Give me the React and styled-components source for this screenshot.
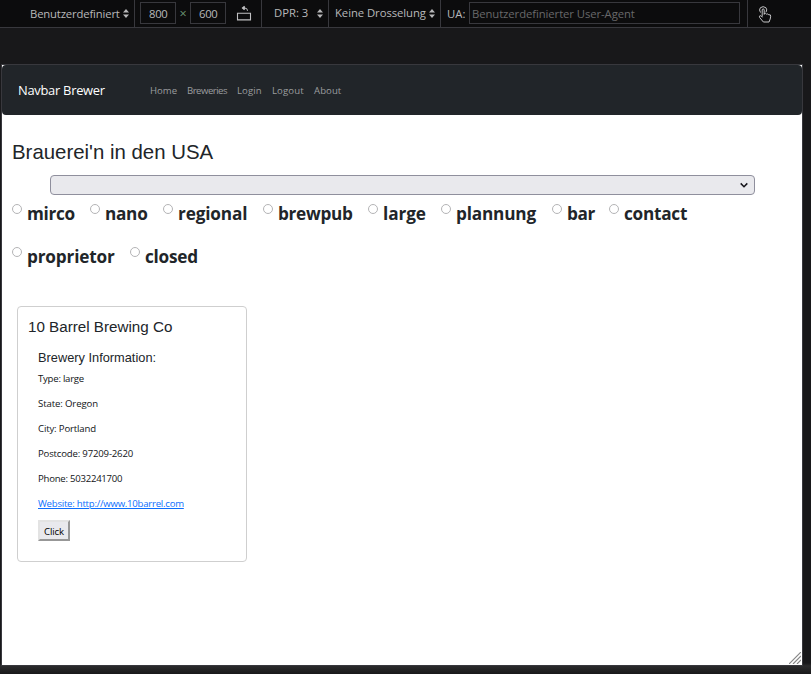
import React from "react";
import styled, { createGlobalStyle } from "styled-components";

const Global = createGlobalStyle`
  * { box-sizing: border-box; }
  body {
    margin: 0;
    background: #18181a;
    font-family: "Open Sans", "Noto Sans", sans-serif;
  }
`;

const Screen = styled.div`
  height: 674px;
  display: flex;
  flex-direction: column;
  overflow: hidden;
  background: #18181a;
`;

const Toolbar = styled.header`
  display: flex;
  height: 28px;
  flex: none;
  background: #0c0c0d;
  border-bottom: 1px solid #38383d;
  color: #b8b8ba;
  font-size: 11.3px;
  white-space: nowrap;
`;

const Group = styled.div`
  display: flex;
  align-items: center;
  width: ${(p) => p.$w}px;
  padding-left: ${(p) => p.$pad}px;
  padding-bottom: ${(p) => p.$lift || 0}px;
  border-right: ${(p) => (p.$last ? "0" : "1px solid #38383d")};
`;

const Text = styled.span`
  display: block;
  flex: none;
  width: ${(p) => p.$w}px;
  letter-spacing: ${(p) => p.$ls || 0}px;
  line-height: 16px;
`;

const SizeField = styled.div`
  width: 36px;
  height: 22px;
  margin-bottom: 1px;
  padding-left: 8px;
  border: 1px solid #38383d;
  line-height: 21px;
  letter-spacing: -0.3px;
`;

const Times = styled.span`
  width: 14px;
  text-align: center;
  font-size: 12.5px;
  color: #6f9a78;
`;

const AgentField = styled.div`
  width: 271px;
  height: 22px;
  margin-bottom: 1px;
  padding-left: 2px;
  border: 1px solid #38383d;
  color: #68686a;
  line-height: 21px;
  letter-spacing: -0.08px;
`;

const Arrows = styled.svg`
  flex: none;
  margin-left: ${(p) => p.$gap || 3}px;
`;

const RotateIcon = styled.svg`
  margin: 0 0 1px 10px;
`;

const Stage = styled.div`
  flex: 1;
  padding: 36px 8px 0 1px;
  background: linear-gradient(#18181a 0 635px, #2b2b2c 638px, #18181a 646px);
`;

const Viewport = styled.main`
  position: relative;
  width: 802px;
  height: 602px;
  border: 1px solid #38383d;
  background: #fff;
  color: #212529;
`;

const Navbar = styled.nav`
  display: flex;
  align-items: center;
  height: 50px;
  padding-left: 16px;
  border-radius: 4px;
  background: #212529;
`;

const Brand = styled.div`
  width: 132px;
  color: #fff;
  font-size: 12.9px;
  letter-spacing: -0.27px;
`;

const NavLink = styled.a`
  width: ${(p) => p.$w}px;
  margin: 2px 10px 0 0;
  color: #9b9d9f;
  font-size: 9.6px;
  letter-spacing: ${(p) => p.$ls}px;
  line-height: 16px;
  white-space: nowrap;
`;

const Title = styled.h1`
  margin: 24px 0 0 10px;
  font: 400 20.4px/26px "Liberation Sans", sans-serif;
`;

const Select = styled.div`
  display: flex;
  align-items: center;
  justify-content: flex-end;
  width: 705px;
  height: 20px;
  margin: 10px 0 0 48px;
  padding-right: 6px;
  border: 1px solid #8f8f9d;
  border-radius: 4px;
  background: #e9e9ed;
`;

const Filters = styled.div`
  display: flex;
  flex-wrap: wrap;
  width: 720px;
  padding: 5px 0 0 10px;
`;

const Option = styled.label`
  display: flex;
  height: 43px;
  margin-right: 15px;
`;

const Radio = styled.span`
  width: 10px;
  height: 10px;
  margin: 4px 5px 0 0;
  border: 1px solid #b4b4b6;
  border-radius: 50%;
`;

const OptionName = styled.span`
  width: ${(p) => p.$w}px;
  font-size: 17.2px;
  font-weight: 700;
  line-height: 28px;
  letter-spacing: ${(p) => p.$ls}px;
  white-space: nowrap;
`;

const Card = styled.section`
  width: 230px;
  height: 256px;
  margin: 20px 0 0 15px;
  padding: 11px 0 0 10px;
  border: 1px solid #cfcfcf;
  border-radius: 4px;
`;

const CardTitle = styled.h2`
  margin: 0;
  font: 400 15.2px/18px "Liberation Sans", sans-serif;
`;

const CardBody = styled.div`
  padding: 14px 0 0 10px;
`;

const CardHeading = styled.h3`
  margin: 0 0 5px;
  font: 400 12.8px/16px "Liberation Sans", sans-serif;
`;

const Fact = styled.p`
  margin: 0 0 10px;
  color: #111417;
  font-size: 9.6px;
  line-height: 15px;
  letter-spacing: ${(p) => p.$ls}px;
`;

const Website = styled.a`
  color: #0d6efd;
  text-decoration: underline;
`;

const Button = styled.button`
  display: block;
  width: 32px;
  height: 21px;
  margin-top: -1px;
  padding: 2px 0 0;
  border: 2px solid;
  border-color: #e3e3e3 #979797 #979797 #e3e3e3;
  background: #e9e9ed;
  color: #000;
  font: 9.6px/15px "Open Sans", sans-serif;
  letter-spacing: -0.1px;
`;

const Grip = styled.svg`
  position: absolute;
  right: 1px;
  bottom: 1px;
`;

const UpDown = ({ gap }) => (
  <Arrows $gap={gap} width="6" height="9" viewBox="0 0 6 9" fill="#b8b8ba">
    <path d="M3 0 6 3.5H0ZM0 5.5H6L3 9Z" />
  </Arrows>
);

const links = [
  ["Home", 27, 0],
  ["Breweries", 40, -0.51],
  ["Login", 25, 0.1],
  ["Logout", 32, 0.1],
  ["About", 27, 0.06],
];

const types = [
  ["mirco", 48, -0.3],
  ["nano", 43, -0.28],
  ["regional", 70, -0.15],
  ["brewpub", 75, -0.28],
  ["large", 43, -0.1],
  ["plannung", 81, -0.17],
  ["bar", 27, -0.4],
  ["contact", 63, -0.25],
  ["proprietor", 88, -0.17],
  ["closed", 53, -0.25],
];

const facts = [
  ["Type: large", -0.24],
  ["State: Oregon", -0.12],
  ["City: Portland", -0.15],
  ["Postcode: 97209-2620", -0.18],
  ["Phone: 5032241700", -0.25],
];

export default function App() {
  return (
    <Screen>
      <Global />
      <Toolbar>
        <Group $w={135} $pad={30}>
          <Text $w={90} $ls={-0.16}>Benutzerdefiniert</Text>
          <UpDown />
        </Group>
        <Group $w={127} $pad={5}>
          <SizeField>800</SizeField>
          <Times>×</Times>
          <SizeField>600</SizeField>
          <RotateIcon width="16" height="16" viewBox="0 0 16 16" fill="none" stroke="#c0c0c2">
            <path d="M1.5 8.2H14.5V14.9H1.5Z" strokeWidth="1.1" />
            <path d="M6.5 3H8.7Q11.5 3 11.5 5.8M8.4 1.2V4.8" />
            <path d="M5.6 3 8.2 .8V5.2Z" fill="#c0c0c2" stroke="none" />
          </RotateIcon>
        </Group>
        <Group $w={67} $pad={12} $lift={1}>
          <Text $w={35}>DPR: 3</Text>
          <UpDown gap={8} />
        </Group>
        <Group $w={112} $pad={6} $lift={1}>
          <Text $w={91} $ls={-0.06}>Keine Drosselung</Text>
          <UpDown />
        </Group>
        <Group $w={307} $pad={6}>
          <Text $w={22}>UA:</Text>
          <AgentField>Benutzerdefinierter User-Agent</AgentField>
        </Group>
        <Group $w={63} $pad={9} $last>
          <svg width="16" height="18" viewBox="0 0 16 18" fill="none" stroke="#c4c4c6" strokeLinejoin="round" strokeLinecap="round">
            <path d="M5.2 11.2V5Q5.2 3.9 6.2 3.9T7.2 5V9.2M7.2 8.6Q8.6 7.6 9.6 9.2Q10.9 8.4 11.8 9.8Q13.8 9.2 13.7 11.2L13.2 14L12 17H6.4L2.6 12.5Q1.9 10.8 3.2 10.6Q4.2 10.6 5.2 12" />
            <path d="M3.3 7.2Q1.6 4.8 3.4 2.7Q6.1 .6 8.9 2.7Q10.6 4.8 9.2 6.9" />
          </svg>
        </Group>
      </Toolbar>
      <Stage>
        <Viewport>
          <Navbar>
            <Brand>Navbar Brewer</Brand>
            {links.map(([name, w, ls]) => (
              <NavLink key={name} $w={w} $ls={ls}>{name}</NavLink>
            ))}
          </Navbar>
          <Title>Brauerei'n in den USA</Title>
          <Select>
            <svg width="8" height="6" viewBox="0 0 8 6" fill="none" stroke="#15141a" strokeWidth="1.5">
              <path d="M.7 1.4 4 4.7 7.3 1.4" />
            </svg>
          </Select>
          <Filters>
            {types.map(([name, w, ls]) => (
              <Option key={name}>
                <Radio />
                <OptionName $w={w} $ls={ls}>{name}</OptionName>
              </Option>
            ))}
          </Filters>
          <Card>
            <CardTitle>10 Barrel Brewing Co</CardTitle>
            <CardBody>
              <CardHeading>Brewery Information:</CardHeading>
              {facts.map(([text, ls]) => (
                <Fact key={text} $ls={ls}>{text}</Fact>
              ))}
              <Fact $ls={-0.24}>
                <Website>Website: http://www.10barrel.com</Website>
              </Fact>
              <Button>Click</Button>
            </CardBody>
          </Card>
          <Grip width="12" height="12" viewBox="0 0 12 12" stroke="#888" strokeWidth="1.2">
            <path d="M0 12 12 0M4 12 12 4M8 12 12 8" />
          </Grip>
        </Viewport>
      </Stage>
    </Screen>
  );
}
